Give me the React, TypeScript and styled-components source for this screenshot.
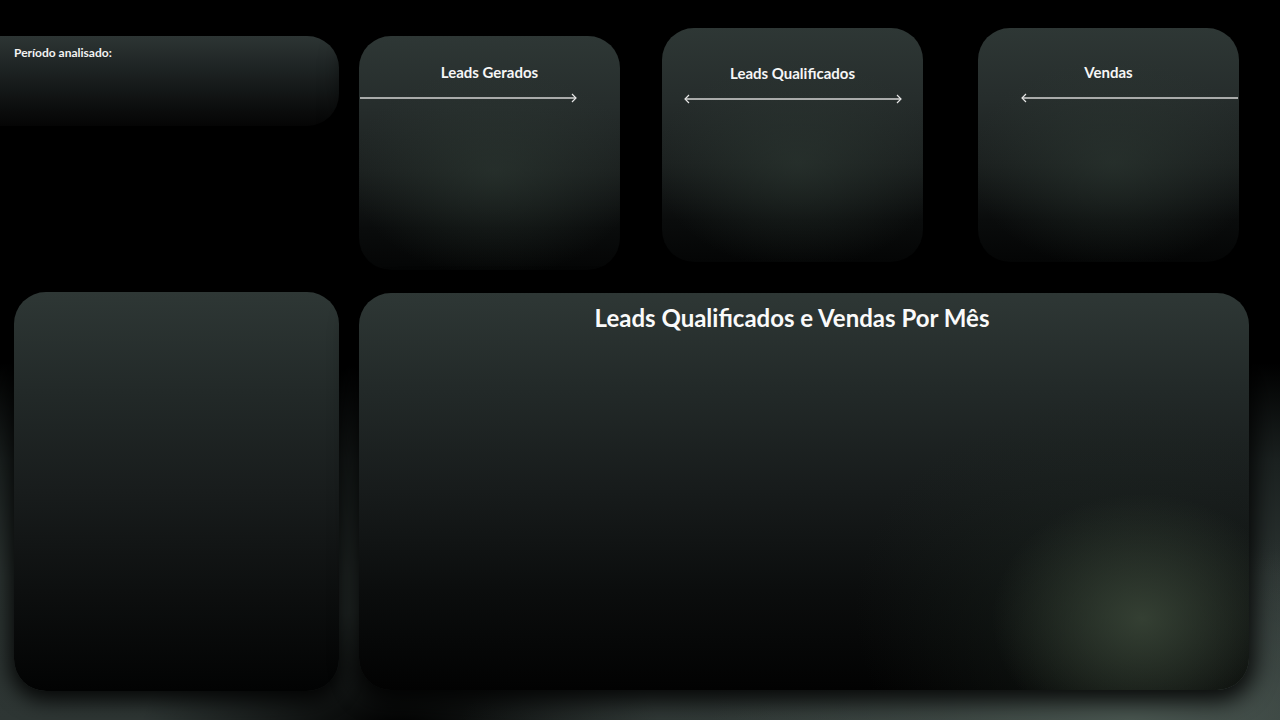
import styled, { createGlobalStyle } from "styled-components";

const GlobalStyle = createGlobalStyle`
    html, body {
        margin: 0;
        padding: 0;
        background: #000;
        overflow: hidden;
    }
    * {
        box-sizing: border-box;
    }
`;

type arrowProps = {
    left?: boolean,
    right?: boolean
}

const ArrowLine = ({left, right}: arrowProps) => {
    return (
        <svg width="218" height="10" viewBox="0 0 218 10">
            <line x1="1" y1="5" x2="217" y2="5" stroke="#a9abaa" strokeWidth="2" />
            {left && <polyline points="5,1 1,5 5,9" fill="none" stroke="#e6e6e6" strokeWidth="1.2" />}
            {right && <polyline points="213,1 217,5 213,9" fill="none" stroke="#e6e6e6" strokeWidth="1.2" />}
        </svg>
    );
};

type kpiProps = {
    title: string,
    top: number,
    gap: number,
    titleTop: number,
    lineOffset: number,
    left?: boolean,
    right?: boolean
}

const KpiCard = ({title, top, gap, titleTop, lineOffset, left, right}: kpiProps) => {
    return (
        <Kpi $top={top} $gap={gap}>
            <KpiTitle $top={titleTop}>{title}</KpiTitle>
            <LineWrap $offset={lineOffset}>
                <ArrowLine left={left} right={right} />
            </LineWrap>
        </Kpi>
    );
};

const App = () => {
    return (
        <>
            <GlobalStyle />
            <Page>
                <TopRow>
                    <PeriodCard>
                        <span>Período analisado:</span>
                    </PeriodCard>
                    <KpiCard title="Leads Gerados" top={36} gap={20} titleTop={36} lineOffset={0} right />
                    <KpiCard title="Leads Qualificados" top={28} gap={42} titleTop={45} lineOffset={22} left right />
                    <KpiCard title="Vendas" top={28} gap={55} titleTop={44} lineOffset={43} left />
                </TopRow>
                <BottomRow>
                    <SideCard />
                    <ChartCard>
                        <ChartTitle>Leads Qualificados e Vendas Por Mês</ChartTitle>
                    </ChartCard>
                </BottomRow>
            </Page>
        </>
    );
};

const Page = styled.div`
    width: 1280px;
    height: 720px;
    overflow: hidden;
    font-family: Lato, "Open Sans", sans-serif;
    color: #fff;
    background:
        radial-gradient(ellipse 420px 180px at 1130px 720px, #4a5751 0%, rgba(70, 82, 77, 0.5) 45%, transparent 100%),
        radial-gradient(ellipse 600px 240px at 1050px 760px, rgba(56, 65, 62, 0.9), transparent 100%),
        radial-gradient(ellipse 260px 120px at 400px 730px, #000 0%, transparent 100%),
        linear-gradient(180deg, #000 0%, #000 50%, #1b2120 64%, #2b3331 80%, #2e3634 100%);
`;

const TopRow = styled.div`
    display: flex;
    align-items: flex-start;
    height: 292px;
`;

const cardFill = `
    background:
        radial-gradient(ellipse 55% 45% at 52% 58%, rgba(46, 58, 52, 0.55), transparent 100%),
        linear-gradient(180deg, #2e3735 0%, #262d2c 30%, #1b201f 58%, #0a0c0c 82%, #040505 100%);
`;

const PeriodCard = styled.div`
    margin-top: 36px;
    margin-left: -30px;
    width: 369px;
    height: 90px;
    padding: 9px 0 0 44px;
    border-radius: 0 32px 32px 0;
    background: linear-gradient(180deg, #2d3534 0%, #1a1f1f 45%, #0a0b0b 85%, #050505 100%);
    box-shadow: 0 0 24px 6px #000;

    & span {
        display: block;
        font-size: 12px;
        line-height: 15px;
        font-weight: 700;
        color: #f2f2f2;
    }
`;

const Kpi = styled.div<{ $top: number, $gap: number }>`
    margin-top: ${p => p.$top}px;
    margin-left: ${p => p.$gap}px;
    width: 261px;
    height: 234px;
    border-radius: 32px;
    ${cardFill}
    box-shadow: 0 0 28px 10px #000;
    display: flex;
    flex-direction: column;
    align-items: center;
`;

const KpiTitle = styled.h2<{ $top: number }>`
    margin: ${p => p.$top - 9}px 0 0;
    font-size: 15px;
    line-height: 18px;
    font-weight: 700;
    color: #f6f6f6;
`;

const LineWrap = styled.div<{ $offset: number }>`
    align-self: flex-start;
    margin-left: ${p => p.$offset}px;
    margin-top: 12px;
    line-height: 0;
`;

const BottomRow = styled.div`
    display: flex;
    align-items: flex-start;
    gap: 20px;
    padding-left: 14px;
`;

const SideCard = styled.div`
    width: 325px;
    height: 399px;
    border-radius: 32px;
    background: linear-gradient(180deg, #2e3735 0%, #222928 25%, #181c1c 50%, #0d0f0f 75%, #020303 100%);
    box-shadow: 0 6px 20px 4px rgba(0, 0, 0, 0.85);
`;

const ChartCard = styled.div`
    margin-top: 1px;
    width: 890px;
    height: 397px;
    border-radius: 32px;
    padding: 10px 24px 0 0;
    text-align: center;
    background:
        radial-gradient(ellipse 150px 125px at 88% 82%, rgba(58, 70, 56, 0.85), transparent 100%),
        radial-gradient(ellipse 260px 220px at 85% 80%, rgba(30, 40, 34, 0.55), transparent 100%),
        linear-gradient(180deg, #2e3735 0%, #222928 25%, #171b1b 50%, #0b0d0d 75%, #020202 100%);
    box-shadow: 0 6px 22px 6px rgba(0, 0, 0, 0.85);
`;

const ChartTitle = styled.h1`
    margin: 0;
    font-size: 24px;
    line-height: 29px;
    font-weight: 700;
    color: #fafafa;
`;

export default App;
